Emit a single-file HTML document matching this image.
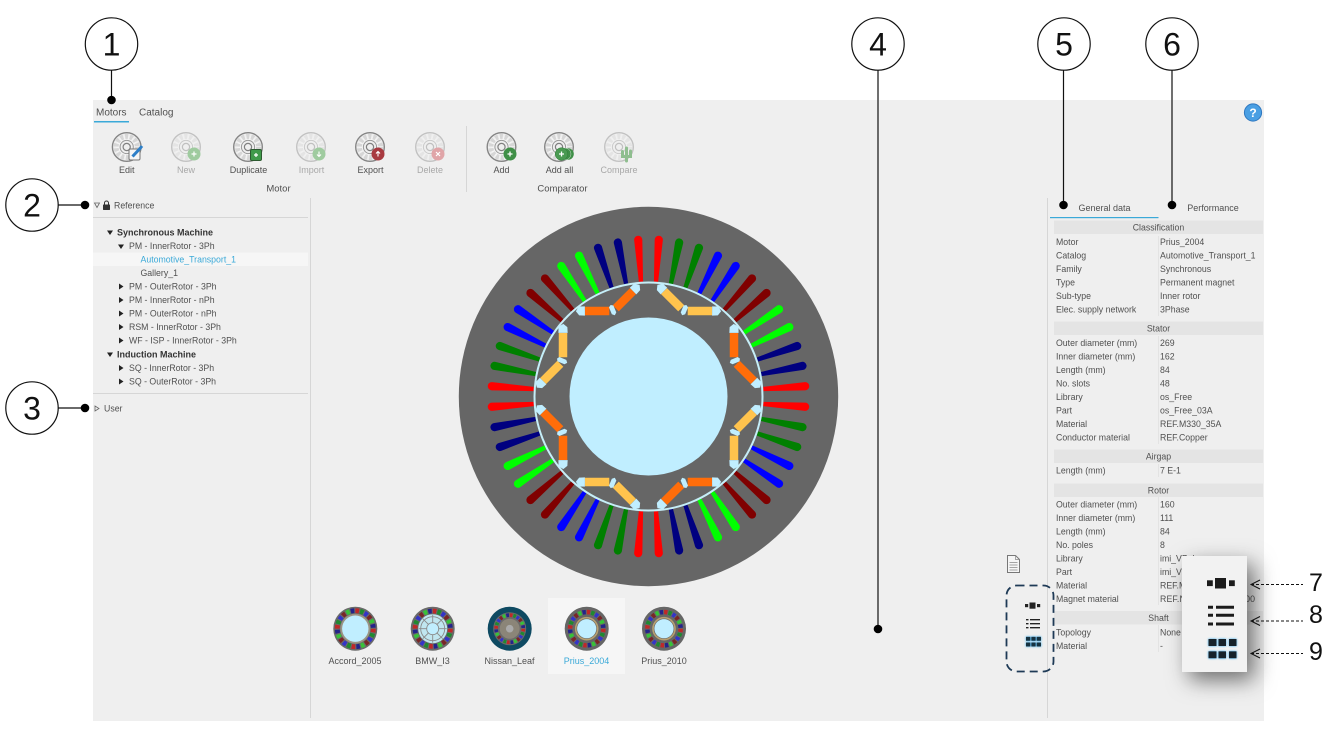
<!DOCTYPE html>
<html><head><meta charset="utf-8"><style>
html,body{margin:0;padding:0;background:#fff;width:1341px;height:731px;overflow:hidden}
svg{display:block;filter:blur(.3px)}
text{font-family:"Liberation Sans",sans-serif;font-size:9px;fill:#505050}
.t text,.t{font-size:8.75px}
.d{fill:#a8a8a8}
.c{text-anchor:middle}
.b{font-weight:bold;fill:#333;font-size:9px}
.n{font-size:32px;fill:#111;text-anchor:middle}
.m{font-size:25px;fill:#111;text-anchor:middle}
.h{fill:#e4e4e4}
</style></head><body>
<svg width="1341" height="731" viewBox="0 0 1341 731" xmlns="http://www.w3.org/2000/svg">
<defs>
<path id="s" d="M-2.1,-115 L-4.1,-157 A4.1,4.1 0 0 1 4.1,-157 L2.1,-115 Z"/>
<g id="q">
<use href="#s" fill="#f00" transform="rotate(3.75)"/>
<use href="#s" fill="#008000" transform="rotate(11.25)"/>
<use href="#s" fill="#008000" transform="rotate(18.75)"/>
<use href="#s" fill="#00f" transform="rotate(26.25)"/>
<use href="#s" fill="#00f" transform="rotate(33.75)"/>
<use href="#s" fill="#800000" transform="rotate(41.25)"/>
<use href="#s" fill="#800000" transform="rotate(48.75)"/>
<use href="#s" fill="#0f0" transform="rotate(56.25)"/>
<use href="#s" fill="#0f0" transform="rotate(63.75)"/>
<use href="#s" fill="#000080" transform="rotate(71.25)"/>
<use href="#s" fill="#000080" transform="rotate(78.75)"/>
<use href="#s" fill="#f00" transform="rotate(86.25)"/>
</g>
<g id="pole">
<path d="M-3.5,-94 L-26,-103.3 M3.5,-94 L26,-103.3" stroke="currentColor" stroke-width="8.5" fill="none"/>
<path d="M27.8,-99 L24.3,-107.6 L30,-109.8 L34.5,-106.5 L33,-101.5 Z" fill="#c0eeff"/>
<path d="M-27.8,-99 L-24.3,-107.6 L-30,-109.8 L-34.5,-106.5 L-33,-101.5 Z" fill="#c0eeff"/>
<path d="M0,-99 L2.4,-97.5 L2.4,-90 L0,-88 L-2.4,-90 L-2.4,-97.5 Z" fill="#c0eeff"/>
</g>
<g id="disc">
<circle r="10.8" fill="#f4f4f4"/>
<circle r="10.6" fill="none" stroke="#d6d6d6" stroke-width="5" stroke-dasharray="3 1.8"/>
<circle r="14.3" fill="none" stroke="#858585" stroke-width="1.4"/>
<circle r="6.6" fill="#efefef" stroke="#999" stroke-width="1"/>
<circle r="3.6" fill="#efefef" stroke="#808080" stroke-width="1.2"/>
</g>
<g id="ring">
<g fill="none" stroke-width="4.6">
<circle r="17" stroke="#c02828" stroke-dasharray="3.4 23.3"/>
<circle r="17" stroke="#1f8a30" stroke-dasharray="3.4 23.3" stroke-dashoffset="-4.45"/>
<circle r="17" stroke="#3434c8" stroke-dasharray="3.4 23.3" stroke-dashoffset="-8.9"/>
<circle r="17" stroke="#7a2626" stroke-dasharray="3.4 23.3" stroke-dashoffset="-13.35"/>
<circle r="17" stroke="#38c238" stroke-dasharray="3.4 23.3" stroke-dashoffset="-17.8"/>
<circle r="17" stroke="#24248a" stroke-dasharray="3.4 23.3" stroke-dashoffset="-22.25"/>
</g>
</g>
<filter id="sh" x="-80%" y="-50%" width="280%" height="220%"><feDropShadow dx="7" dy="8" stdDeviation="11" flood-color="#000" flood-opacity=".55"/></filter>
<filter id="gl" x="-30%" y="-30%" width="160%" height="160%"><feDropShadow dx="0" dy="0" stdDeviation="1.1" flood-color="#22a5f0" flood-opacity="1"/></filter>
</defs>

<rect x="93" y="100" width="1171" height="621" fill="#efefef"/>

<!-- separators -->
<g stroke="#d6d6d6" stroke-width="1" fill="none">
<path d="M310.5,198V718M1047.5,198V718M466.5,126V192M93,217.5H308M93,393.5H308"/>
</g>

<!-- tabs -->
<text x="96" y="115.5" style="font-size:10px">Motors</text>
<text x="139" y="115.5" style="font-size:10px">Catalog</text>
<rect x="94" y="121" width="35" height="1.5" fill="#3aa9d8"/>

<!-- help -->
<circle cx="1253" cy="112.5" r="8.6" fill="#4a9fe3" stroke="#2f78c0" stroke-width="1"/>
<text x="1253" y="117" class="c" style="font-size:12px;font-weight:bold;fill:#fff">?</text>

<!-- toolbar -->
<use href="#disc" transform="translate(126.7,147)"/>
<g opacity=".42"><use href="#disc" transform="translate(186,147)"/></g>
<use href="#disc" transform="translate(248,147)"/>
<g opacity=".42"><use href="#disc" transform="translate(311,147)"/></g>
<use href="#disc" transform="translate(370,147)"/>
<g opacity=".42"><use href="#disc" transform="translate(430,147)"/></g>
<use href="#disc" transform="translate(501.5,147)"/>
<use href="#disc" transform="translate(559,147)"/>
<g opacity=".42"><use href="#disc" transform="translate(619,147)"/></g>

<!-- edit badge -->
<rect x="129" y="149" width="11" height="11" rx="1.5" fill="#f5f5f5" stroke="#777" stroke-width="1"/>
<path d="M132.5,156.5 L140,148.5 L142,146" stroke="#2d7fc8" stroke-width="3" fill="none"/>
<!-- new -->
<circle cx="194" cy="154" r="6.5" fill="#9fcb9f"/>
<path d="M191.5,154H196.5M194,151.5V156.5" stroke="#fff" stroke-width="1.2"/>
<!-- duplicate -->
<rect x="250.5" y="149.5" width="11" height="11" rx="1.5" fill="#3f9a4a" stroke="#2c5a30" stroke-width="1"/>
<path d="M254,155H258M256,153V157" stroke="#fff" stroke-width="1.2"/>
<!-- import -->
<circle cx="319" cy="154" r="6.5" fill="#9fcb9f"/>
<path d="M319,151.5V156.5M317,154.5L319,156.5L321,154.5" stroke="#fff" stroke-width="1.1" fill="none"/>
<!-- export -->
<circle cx="378" cy="154" r="6.5" fill="#a83a40"/>
<path d="M378,156.5V151.5M376,153.5L378,151.5L380,153.5" stroke="#fff" stroke-width="1.1" fill="none"/>
<!-- delete -->
<circle cx="438" cy="154" r="6.5" fill="#e0a5a8"/>
<path d="M436,152L440,156M440,152L436,156" stroke="#fff" stroke-width="1.2"/>
<!-- add -->
<circle cx="510" cy="154" r="6.5" fill="#3f8f47"/>
<path d="M507.5,154H512.5M510,151.5V156.5" stroke="#fff" stroke-width="1.3"/>
<!-- add all -->
<circle cx="568" cy="154" r="5.8" fill="#3f8f47"/>
<circle cx="565" cy="154" r="6" fill="#3f8f47" stroke="#efefef" stroke-width=".4"/>
<circle cx="561.5" cy="154" r="6.3" fill="#4a9a52" stroke="#2f7a37" stroke-width=".5"/>
<path d="M559,154H564M561.5,151.5V156.5" stroke="#fff" stroke-width="1.3"/>
<!-- compare: cactus -->
<path d="M626.5,148V161M622.5,151.5V156.5H630.5V151" stroke="#8fbe8f" stroke-width="3" stroke-linecap="round" fill="none"/>

<text x="126.7" y="173" class="c">Edit</text>
<text x="186" y="173" class="c d">New</text>
<text x="248.5" y="173" class="c">Duplicate</text>
<text x="311.5" y="173" class="c d">Import</text>
<text x="370.5" y="173" class="c">Export</text>
<text x="430" y="173" class="c d">Delete</text>
<text x="501.5" y="173" class="c">Add</text>
<text x="559.5" y="173" class="c">Add all</text>
<text x="619" y="173" class="c d">Compare</text>
<text x="278.5" y="191.5" class="c" style="font-size:9.5px">Motor</text>
<text x="562.5" y="191.5" class="c" style="font-size:9.5px">Comparator</text>

<!-- tree -->
<path d="M94.5,203L99.5,203L97,207.5Z" fill="none" stroke="#666" stroke-width=".8"/>
<rect x="103" y="204.5" width="7" height="5.5" rx=".6" fill="#333"/>
<path d="M104.5,204.5V203A2,2 0 0 1 108.5,203V204.5" fill="none" stroke="#333" stroke-width="1"/>
<text x="114" y="208.5" class="t">Reference</text>
<rect x="93" y="252.5" width="215" height="13.5" fill="#f6f6f6"/>
<g fill="#222">
<path d="M107,230.5h6l-3,4.5zM118,244.5h6l-3,4.5zM107,352.5h6l-3,4.5z"/>
<path d="M119,283.5v6l4.5,-3zM119,297v6l4.5,-3zM119,310.5v6l4.5,-3zM119,324v6l4.5,-3zM119,337.5v6l4.5,-3zM119,365v6l4.5,-3zM119,378.5v6l4.5,-3z"/>
</g>
<text x="117" y="235.5" class="b">Synchronous Machine</text>
<g class="t">
<text x="129" y="249">PM - InnerRotor - 3Ph</text>
<text x="140.5" y="262.5" style="fill:#3aa9d8">Automotive_Transport_1</text>
<text x="140.5" y="276">Gallery_1</text>
<text x="129" y="289.5">PM - OuterRotor - 3Ph</text>
<text x="129" y="303">PM - InnerRotor - nPh</text>
<text x="129" y="316.5">PM - OuterRotor - nPh</text>
<text x="129" y="330">RSM - InnerRotor - 3Ph</text>
<text x="129" y="343.5">WF - ISP - InnerRotor - 3Ph</text>
<text x="129" y="371">SQ - InnerRotor - 3Ph</text>
<text x="129" y="384.5">SQ - OuterRotor - 3Ph</text>
</g>
<text x="117" y="357.5" class="b">Induction Machine</text>
<path d="M95,406v5l4,-2.5z" fill="none" stroke="#666" stroke-width=".8"/>
<text x="104" y="411.5" class="t">User</text>

<!-- main motor -->
<g transform="translate(648.5,396.5)">
<circle r="189.7" fill="#666"/>
<use href="#q"/>
<use href="#q" transform="rotate(90)"/>
<use href="#q" transform="rotate(180)"/>
<use href="#q" transform="rotate(270)"/>
<circle r="114" fill="#666" stroke="#c5eef8" stroke-width="2"/>
<use href="#pole" style="color:#ffc34d" transform="rotate(22.5)"/>
<use href="#pole" style="color:#ff6d0a" transform="rotate(67.5)"/>
<use href="#pole" style="color:#ffc34d" transform="rotate(112.5)"/>
<use href="#pole" style="color:#ff6d0a" transform="rotate(157.5)"/>
<use href="#pole" style="color:#ffc34d" transform="rotate(202.5)"/>
<use href="#pole" style="color:#ff6d0a" transform="rotate(247.5)"/>
<use href="#pole" style="color:#ffc34d" transform="rotate(292.5)"/>
<use href="#pole" style="color:#ff6d0a" transform="rotate(337.5)"/>
<circle r="79" fill="#c0eeff"/>
</g>

<!-- thumbnails -->
<rect x="548" y="598" width="77" height="76" fill="#f6f6f6"/>
<g transform="translate(355.3,628.7)">
<circle r="22" fill="#6a6a6a"/><use href="#ring" transform="scale(1.06)"/>
<circle r="15" fill="#9b9484"/><circle r="13.2" fill="#c0eeff"/>
</g>
<g transform="translate(432.7,628.7)">
<circle r="22" fill="#6a6a6a"/><use href="#ring" transform="scale(1.04)"/>
<circle r="14.5" fill="#c0e6f0"/>
<circle r="12" fill="none" stroke="#8a8a8a" stroke-width=".9"/>
<circle r="6" fill="#c0eeff" stroke="#8a8a8a" stroke-width=".9"/>
<path d="M0,-14V-6M0,14V6M-14,0H-6M14,0H6M-10,-10L-4,-4M10,-10L4,-4M-10,10L-4,4M10,10L4,4" stroke="#8a8a8a" stroke-width=".9"/>
</g>
<g transform="translate(509.7,628.7)">
<circle r="22" fill="#0e4a62"/><circle r="16.5" fill="#6a6a6a"/>
<use href="#ring" transform="scale(.8)"/>
<circle r="10" fill="#8b8578"/>
<circle r="3.8" fill="#aaa"/>
</g>
<g transform="translate(586.7,628.7)">
<circle r="22" fill="#666"/><use href="#ring" transform="scale(.98)"/>
<circle r="11" fill="none" stroke="#b8a070" stroke-width="1.6"/>
<circle r="9.6" fill="#c0eeff"/>
</g>
<g transform="translate(664,628.7)">
<circle r="22" fill="#666"/><use href="#ring" transform="scale(.98)"/>
<circle r="11" fill="none" stroke="#b8a070" stroke-width="1.6"/>
<circle r="9.6" fill="#c0eeff"/>
</g>
<text x="355" y="664" class="c">Accord_2005</text>
<text x="432.5" y="664" class="c">BMW_I3</text>
<text x="509.5" y="664" class="c">Nissan_Leaf</text>
<text x="586.5" y="664" class="c" style="fill:#3aa9d8">Prius_2004</text>
<text x="664" y="664" class="c">Prius_2010</text>

<!-- right tabs -->
<text x="1104.5" y="211" class="c">General data</text>
<text x="1213" y="211" class="c">Performance</text>
<rect x="1050" y="217" width="108.5" height="1.2" fill="#3aa9d8"/>

<!-- table -->
<path d="M1158.5,236V316M1158.5,336V444M1158.5,464V477M1158.5,497V605M1158.5,625V652" stroke="#e3e3e3"/>
<rect x="1054" y="220.5" width="209" height="13.5" class="h"/>
<rect x="1054" y="321.5" width="209" height="13.5" class="h"/>
<rect x="1054" y="449.5" width="209" height="13.5" class="h"/>
<rect x="1054" y="483.5" width="209" height="13.5" class="h"/>
<rect x="1054" y="611" width="209" height="13.5" class="h"/>
<g class="t">
<text x="1158.5" y="230.5" class="c">Classification</text>
<text x="1158.5" y="331.5" class="c">Stator</text>
<text x="1158.5" y="459.5" class="c">Airgap</text>
<text x="1158.5" y="493.5" class="c">Rotor</text>
<text x="1158.5" y="621" class="c">Shaft</text>

<text x="1056" y="245">Motor</text><text x="1160" y="245">Prius_2004</text>
<text x="1056" y="258.5">Catalog</text><text x="1160" y="258.5">Automotive_Transport_1</text>
<text x="1056" y="272">Family</text><text x="1160" y="272">Synchronous</text>
<text x="1056" y="285.5">Type</text><text x="1160" y="285.5">Permanent magnet</text>
<text x="1056" y="299">Sub-type</text><text x="1160" y="299">Inner rotor</text>
<text x="1056" y="312.5">Elec. supply network</text><text x="1160" y="312.5">3Phase</text>

<text x="1056" y="346">Outer diameter (mm)</text><text x="1160" y="346">269</text>
<text x="1056" y="359.5">Inner diameter (mm)</text><text x="1160" y="359.5">162</text>
<text x="1056" y="373">Length (mm)</text><text x="1160" y="373">84</text>
<text x="1056" y="386.5">No. slots</text><text x="1160" y="386.5">48</text>
<text x="1056" y="400">Library</text><text x="1160" y="400">os_Free</text>
<text x="1056" y="413.5">Part</text><text x="1160" y="413.5">os_Free_03A</text>
<text x="1056" y="427">Material</text><text x="1160" y="427">REF.M330_35A</text>
<text x="1056" y="440.5">Conductor material</text><text x="1160" y="440.5">REF.Copper</text>

<text x="1056" y="473.5">Length (mm)</text><text x="1160" y="473.5">7 E-1</text>

<text x="1056" y="507.5">Outer diameter (mm)</text><text x="1160" y="507.5">160</text>
<text x="1056" y="521">Inner diameter (mm)</text><text x="1160" y="521">111</text>
<text x="1056" y="534.5">Length (mm)</text><text x="1160" y="534.5">84</text>
<text x="1056" y="548">No. poles</text><text x="1160" y="548">8</text>
<text x="1056" y="561.5">Library</text><text x="1160" y="561.5">imi_VPole</text>
<text x="1056" y="575">Part</text><text x="1160" y="575">imi_VPole</text>
<text x="1056" y="588.5">Material</text><text x="1160" y="588.5">REF.M330</text>
<text x="1056" y="602">Magnet material</text><text x="1160" y="602" textLength="95" lengthAdjust="spacing">REF.NdFeB_Sm_11000</text>

<text x="1056" y="635.5">Topology</text><text x="1160" y="635.5">None</text>
<text x="1056" y="649">Material</text><text x="1160" y="649">-</text>
</g>

<!-- doc icon -->
<path d="M1007.5,555.5H1015.5L1019.5,559.5V572.5H1007.5Z" fill="#f5f5f5" stroke="#777" stroke-width="1"/>
<path d="M1015.5,555.5V559.5H1019.5M1009.5,562.5H1017.5M1009.5,565H1017.5M1009.5,567.5H1017.5M1009.5,570H1017.5" fill="none" stroke="#888" stroke-width=".7"/>

<!-- small view icons -->
<g fill="#222">
<rect x="1025" y="604" width="3.2" height="3.2"/><rect x="1029.5" y="602.5" width="6" height="6.2"/><rect x="1037" y="604" width="3.2" height="3.2"/>
<path d="M1026,619h2.5v1.4h-2.5zM1030,619h10v1.4h-10zM1026,623h2.5v1.4h-2.5zM1030,623h10v1.4h-10zM1026,627h2.5v1.4h-2.5zM1030,627h10v1.4h-10z"/>
</g>
<g fill="#12303f" filter="url(#gl)">
<rect x="1026" y="636.8" width="4.4" height="4"/><rect x="1031.3" y="636.8" width="4.4" height="4"/><rect x="1036.6" y="636.8" width="4.4" height="4"/>
<rect x="1026" y="642.5" width="4.4" height="4"/><rect x="1031.3" y="642.5" width="4.4" height="4"/><rect x="1036.6" y="642.5" width="4.4" height="4"/>
</g>

<!-- dashed frame -->
<rect x="1006.5" y="585.5" width="47" height="86" rx="10" fill="none" stroke="#1e3a56" stroke-width="1.8" stroke-dasharray="8 5"/>

<!-- popup -->
<rect x="1182" y="556" width="65" height="116" fill="#f2f2f2" filter="url(#sh)"/>
<g fill="#1c1c1c">
<rect x="1207" y="580.3" width="5.8" height="5.8"/><rect x="1215" y="578" width="11" height="10.5"/><rect x="1229" y="580.3" width="5.8" height="5.8"/>
<path d="M1208,605.7h5v3h-5zM1216,605.7h18v3h-18zM1208,613.8h5v3h-5zM1216,613.8h18v3h-18zM1208,622.5h5v3h-5zM1216,622.5h18v3h-18z"/>
</g>
<g fill="#14202a" filter="url(#gl)">
<rect x="1208.5" y="639" width="8" height="7"/><rect x="1218.5" y="639" width="7.5" height="7"/><rect x="1229" y="639" width="7.5" height="7"/>
<rect x="1208.5" y="651.3" width="8" height="7"/><rect x="1218.5" y="651.3" width="7.5" height="7"/><rect x="1229" y="651.3" width="7.5" height="7"/>
</g>

<!-- arrows -->
<g fill="none" stroke="#111" stroke-width="1">
<path d="M1251,584.5H1303" stroke-dasharray="3 2"/>
<path d="M1260,580L1251,584.5L1260,589"/>
<path d="M1251,621H1303" stroke-dasharray="3 2"/>
<path d="M1260,616.5L1251,621L1260,625.5"/>
<path d="M1251,653.5H1303" stroke-dasharray="3 2"/>
<path d="M1260,649L1251,653.5L1260,658"/>
</g>
<text x="1316" y="591" class="m">7</text>
<text x="1316" y="623" class="m">8</text>
<text x="1316" y="660" class="m">9</text>

<!-- callouts -->
<g fill="none" stroke="#111" stroke-width="1.2">
<path d="M111.5,70V100M58,205H85M58,408H85M878,70V629M1063.5,70V205M1172,70V205"/>
<g fill="#fff">
<circle cx="111.5" cy="44" r="26.2"/><circle cx="32" cy="205" r="26.2"/><circle cx="32" cy="408" r="26.2"/>
<circle cx="878" cy="44" r="26.2"/><circle cx="1064" cy="44" r="26.2"/><circle cx="1172" cy="44" r="26.2"/>
</g>
</g>
<g fill="#000">
<circle cx="111.5" cy="100" r="4.3"/><circle cx="85" cy="205" r="4.3"/><circle cx="85" cy="408" r="4.3"/>
<circle cx="878" cy="629" r="4.3"/><circle cx="1063.5" cy="205" r="4.3"/><circle cx="1172" cy="205" r="4.3"/>
</g>
<text x="111.5" y="55.5" class="n">1</text>
<text x="32" y="216.5" class="n">2</text>
<text x="32" y="419.5" class="n">3</text>
<text x="878" y="55.5" class="n">4</text>
<text x="1064" y="55.5" class="n">5</text>
<text x="1172" y="55.5" class="n">6</text>
</svg>
</body></html>
